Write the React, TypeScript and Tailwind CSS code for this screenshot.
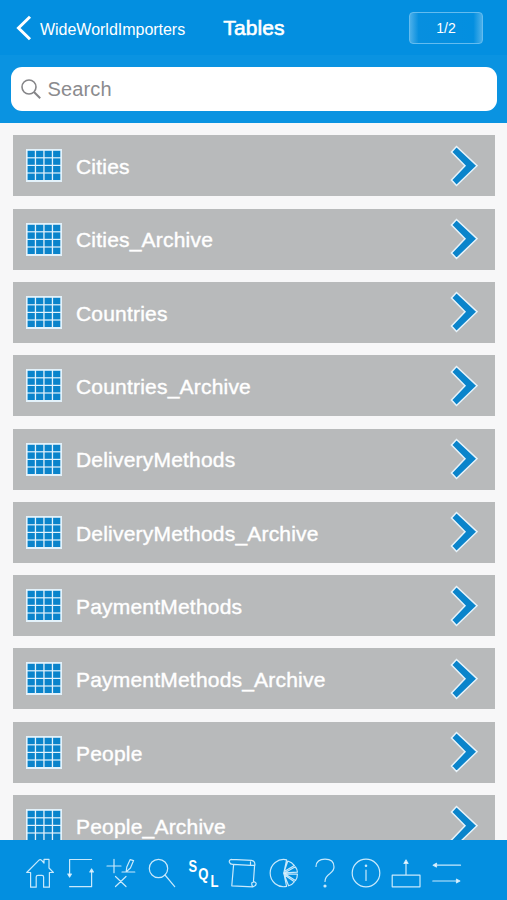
import React from "react";

const tables = [
  "Cities",
  "Cities_Archive",
  "Countries",
  "Countries_Archive",
  "DeliveryMethods",
  "DeliveryMethods_Archive",
  "PaymentMethods",
  "PaymentMethods_Archive",
  "People",
  "People_Archive",
];

function GridIcon() {
  const cells = [0, 1, 2, 3];
  return (
    <svg viewBox="0 0 36 33" className="h-[33px] w-9 shrink-0">
      <rect width="36" height="33" fill="#e3f2fb" />
      {cells.map((r) =>
        cells.map((c) => (
          <rect key={`${r}-${c}`} x={1.6 + c * 8.5} y={1.8 + r * 7.6} width="7.2" height="6.4" fill="#0a84cb" />
        )),
      )}
    </svg>
  );
}

function RowChevron() {
  return (
    <svg viewBox="0 0 28 42" className="h-[42px] w-7 shrink-0">
      <path d="M6.5 1.5 L27 20.7 L6.5 40.5 L1.5 35 L15 20.7 L1.5 7 Z" fill="#0a84cb" stroke="#e8f4fb" strokeWidth="1.5" />
    </svg>
  );
}

const icons: React.ReactNode[] = [
  <path key="home" d="M1.7 14.5 L14 2.2 Q15.2 1 16.4 2.2 L19 5 V1.4 H24 V10 L28.4 14.5 H24.4 V29.2 H18.6 V19 Q18.6 17.3 17 17.3 H13 Q11.2 17.3 11.2 19 V29.2 H5.6 V14.5 Z" />,
  <g key="sync">
    <path d="M25.5 1.5 H3.6 V17 M3.6 28.7 H25.6 V13" />
    <path d="M1.8 16 H5.4 L3.6 19 Z M23.8 14 H27.4 L25.6 11 Z" fill="white" />
  </g>,
  <g key="ops">
    <path d="M1 8 H15 M8 1.3 V14.7 M9.5 18.5 L20 28.5 M20 18.5 L9.5 28.5 M16 14 H28.8 M20.2 13.5 L20.8 9 L24.2 1.6 L27.6 2.6 L24.4 10 L20.8 13.2 Z" />
  </g>,
  <g key="find"><circle cx="11.5" cy="10.5" r="9.2" /><path d="M18 17 L27.7 28.6" /></g>,
  <g key="sql" fill="white" stroke="none" className="font-['Liberation_Sans',sans-serif] font-bold">
    <text x="0.4" y="14" fontSize="17" textLength="8.6" lengthAdjust="spacingAndGlyphs">S</text>
    <text x="10.3" y="21.8" fontSize="17" textLength="10.2" lengthAdjust="spacingAndGlyphs">Q</text>
    <text x="22.4" y="29.2" fontSize="17" textLength="8" lengthAdjust="spacingAndGlyphs">L</text>
  </g>,
  <g key="script">
    <path d="M3.5 1.3 L23.5 2.4 Q27.4 3 26.8 7.4 H22.5 V3.8 M3.5 1.3 Q0.8 2 1.4 4.2 Q2.2 6.6 5.2 6.4 L22.5 7.4 M5.6 6.6 L3.8 27.8 L25 28.8 Q28.8 27.6 28 25 Q26.4 22.8 24 24.6 Q23.2 27 25 28.8 M26.6 7.4 L25.4 24" />
  </g>,
  <g key="pie">
    <path d="M17.6 1.8 A13.6 13.6 0 1 0 17.6 28.4 L14.8 15 Z M15.2 13.6 L18.8 3 Q23 4.2 25.4 7.6 Z M15.8 14.8 L26.4 8.8 Q28.4 11.4 28.4 14.2 Z M15.8 15.8 L28.4 16.2 Q28.4 20 26.4 22.6 Z M15.2 16.8 L25.4 23.8 Q23.6 26.6 19.6 27.8 Z" />
    <circle cx="16" cy="15.2" r="1.1" fill="white" />
  </g>,
  <g key="help">
    <path d="M6 8.5 Q6.5 1.2 15 1.2 Q24 1.2 24 9 Q24 12.5 20 15.5 Q15 19 15 23.5" />
    <circle cx="15" cy="28" r="1" fill="white" />
  </g>,
  <g key="info"><circle cx="15" cy="15" r="13.8" /><path d="M15 12 V22.5" /><circle cx="15" cy="7.8" r="0.7" fill="white" /></g>,
  <g key="upload">
    <path d="M1.2 17.2 H29 V28.8 H1.2 Z M15 17 V4" />
    <path d="M13 5.5 H17 L15 2 Z" fill="white" />
  </g>,
  <g key="swap">
    <path d="M3 7.2 H28.5 M0.8 23 H26" />
    <path d="M4.5 5.4 V9 L1.2 7.2 Z M24.5 21.2 V24.8 L27.8 23 Z" fill="white" />
  </g>,
];

export default function App() {
  return (
    <div className="flex h-[900px] w-[507px] flex-col overflow-hidden bg-[#f7f7f8] font-['Liberation_Sans',Arial,sans-serif] text-white">
      <header className="shrink-0 bg-[#038fe0]">
        <div className="grid h-[55px] grid-cols-[206px_96px_205px] items-center">
          <div className="flex items-center pl-4">
            <svg viewBox="0 0 16 26" className="mr-2 h-[26px] w-4" fill="none" stroke="white" strokeWidth="3">
              <path d="M14 1.8 L2.5 13 L14 24.2" />
            </svg>
            <span className="pt-1 text-[16px] tracking-[-0.02px]">WideWorldImporters</span>
          </div>
          <h1 className="pt-px text-center text-[21px] tracking-[0.1px] [-webkit-text-stroke:0.6px_white]">Tables</h1>
          <div className="mt-px ml-[107px] flex h-8 w-[74px] items-center justify-center rounded-[4px] border border-[#64bcef] bg-[linear-gradient(90deg,#4bafe9_0%,#078fdf_12%,#038fe0_88%,#4bafe9_100%)] text-[14px]">1/2</div>
        </div>
        <div className="h-[68px] bg-[#0a93e1] px-[10.5px] pt-3">
          <div className="flex h-11 items-center rounded-[11px] bg-white pl-2.5 text-[#8b8b8e]">
            <svg viewBox="0 0 20 20" className="mr-[7px] h-5 w-5" fill="none" stroke="#858588" strokeWidth="1.6">
              <circle cx="8" cy="8" r="7" /><path d="M13 13 L19.2 19.2" strokeWidth="2" />
            </svg>
            <span className="text-[20px] tracking-[0.15px]">Search</span>
          </div>
        </div>
      </header>
      <main className="flex h-[717px] shrink-0 flex-col gap-[12.3px] overflow-hidden pt-[12.4px] pr-[12.5px] pl-[13px]">
        {tables.map((name) => (
          <div key={name} className="flex h-[61px] shrink-0 items-center bg-[#b8babb] pr-[17px] pl-[13px]">
            <GridIcon />
            <span className="ml-[14px] flex-1 pt-[2px] text-[21px] tracking-[0.2px] [-webkit-text-stroke:0.4px_white]">{name}</span>
            <RowChevron />
          </div>
        ))}
      </main>
      <footer className="flex h-[60px] shrink-0 items-center justify-start gap-[10.7px] bg-[#038fe0] pt-[6px] pl-[25px]">
        {icons.map((icon, i) => (
          <svg key={i} viewBox="0 0 30 30" className="h-[30px] w-[30px] shrink-0 overflow-visible" fill="none" stroke="#c9e9fb" strokeWidth="1.2" strokeLinejoin="round" strokeLinecap="round">
            {icon}
          </svg>
        ))}
      </footer>
    </div>
  );
}
